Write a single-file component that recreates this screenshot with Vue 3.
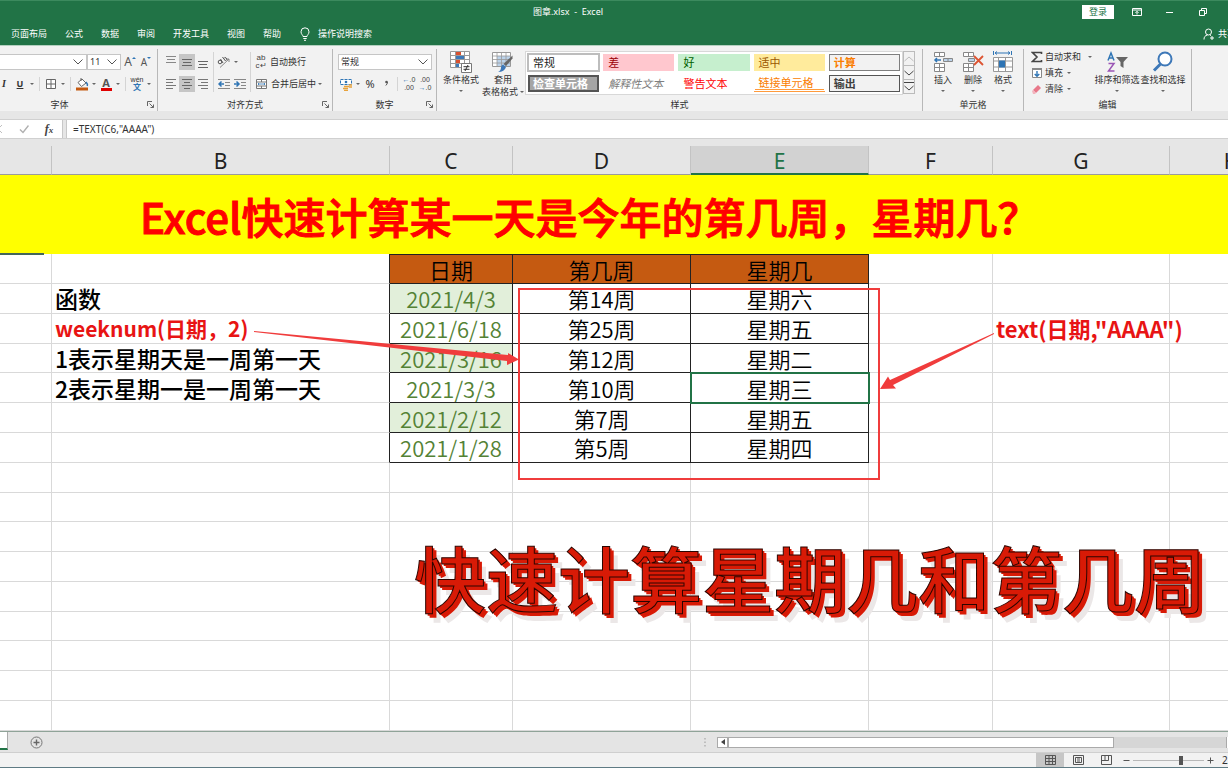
<script setup>
import { ref } from 'vue'

const tabs = ['页面布局', '公式', '数据', '审阅', '开发工具', '视图', '帮助']
const columns = ['A', 'B', 'C', 'D', 'E', 'F', 'G', 'H']
const formula = ref('=TEXT(C6,"AAAA")')
const zoom = ref(69)

const styles = [
  { name: '常规', kind: 'normal' },
  { name: '差', kind: 'bad' },
  { name: '好', kind: 'good' },
  { name: '适中', kind: 'neutral' },
  { name: '计算', kind: 'calc' },
  { name: '检查单元格', kind: 'check' },
  { name: '解释性文本', kind: 'explain' },
  { name: '警告文本', kind: 'warn' },
  { name: '链接单元格', kind: 'linked' },
  { name: '输出', kind: 'output' },
]

const rows = [
  { b: '', c: '日期', d: '第几周', e: '星期几', head: true },
  { b: '函数', c: '2021/4/3', d: '第14周', e: '星期六', tint: true },
  { b: 'weeknum(日期，2)', red: true, c: '2021/6/18', d: '第25周', e: '星期五', g: 'text(日期,"AAAA")' },
  { b: '1表示星期天是一周第一天', c: '2021/3/16', d: '第12周', e: '星期二', tint: true },
  { b: '2表示星期一是一周第一天', c: '2021/3/3', d: '第10周', e: '星期三', active: true },
  { b: '', c: '2021/2/12', d: '第7周', e: '星期五', tint: true },
  { b: '', c: '2021/1/28', d: '第5周', e: '星期四' },
]
const blankRows = 9
</script>

<template>
  <div class="app">
    <header class="top">
      <div class="titlebar">
        <span class="doc">图章.xlsx&nbsp; -&nbsp; Excel</span>
        <div class="win">
          <button class="login">登录</button>
          <button class="wbtn" aria-label="功能区显示选项">
            <svg width="10" height="8" viewBox="0 0 10 8"><path d="M.5.5h9v7h-9zM.5 2h9M5 6.500V3.500M3.500 4.800L5 3.300l1.500 1.500" /></svg>
          </button>
          <button class="wbtn" aria-label="最小化">
            <svg width="10" height="8" viewBox="0 0 10 8"><path d="M1 4.500h7" /></svg>
          </button>
          <button class="wbtn" aria-label="还原">
            <svg width="10" height="8" viewBox="0 0 10 8"><path d="M1.500 2.500h5v5h-5zM3.500 2.500v-2h5v5h-2" /></svg>
          </button>
        </div>
      </div>
      <nav class="tabs">
        <button v-for="t in tabs" :key="t" class="tab">{{ t }}</button>
        <button class="tab tell">
          <svg width="12" height="14" viewBox="0 0 12 14"><path d="M4 9.500C4 8 2 7.300 2 4.800a4 4 0 0 1 8 0C10 7.300 8 8 8 9.500zM4.300 11.500h3.400M5 13.300h2" /></svg>
          <span>操作说明搜索</span>
        </button>
        <button class="tab share">
          <svg width="12" height="12" viewBox="0 0 12 12"><circle cx="5.500" cy="4" r="3" /><path d="M4.500 7C2 7.500 1 9 1 11.500M7 7l1 .6M7 10h4M9 8v4" /></svg>
          <span>共享</span>
        </button>
      </nav>
    </header>

    <div class="ribbon">
      <section class="group g-font">
        <div class="body lines">
          <div class="line first">
            <span class="pick name">
              <select aria-label="字体"><option>等线</option></select>
              <svg width="10" height="6" viewBox="0 0 10 6"><path d="M.5.5L5 5 9.500.5" /></svg>
            </span>
            <span class="pick size">
              <select aria-label="字号"><option>11</option></select>
              <svg width="10" height="6" viewBox="0 0 10 6"><path d="M.5.5L5 5 9.500.5" /></svg>
            </span>
            <button class="ib glyph" aria-label="增大字号"><span>A</span><svg width="4" height="12" viewBox="0 0 4 12"><path d="M0 3L2 1l2 2z" fill="#2f75b5" /></svg></button>
            <button class="ib glyph less" aria-label="减小字号"><span>A</span><svg width="4" height="12" viewBox="0 0 4 12"><path d="M0 1l2 2 2-2z" fill="#2f75b5" /></svg></button>
          </div>
          <div class="line second">
            <button class="ib italic">I</button>
            <button class="ib under">U</button>
            <button class="caret" aria-label="下划线选项"></button>
            <i class="sep"></i>
            <button class="ib" aria-label="边框">
              <svg width="12" height="12" viewBox="0 0 12 12"><path d="M1.500 1.500h9v9h-9zM6 1.500v9M1.500 6h9" stroke="#666" fill="#fff" /></svg>
            </button>
            <button class="caret" aria-label="边框选项"></button>
            <i class="sep"></i>
            <button class="ib" aria-label="填充颜色">
              <svg width="14" height="14" viewBox="0 0 14 14"><path d="M3 5.500L7 2l4 4-4.500 3.500zM6 4V1" stroke="#666" fill="#fff" /><path d="M11 5q2 2 1.300 4" stroke="#2f75b5" stroke-width="1.500" fill="none" /><path d="M1 10.500h12v3H1z" fill="#c55a11" /></svg>
            </button>
            <button class="caret" aria-label="填充颜色选项"></button>
            <button class="ib fontcolor" aria-label="字体颜色"><span>A</span></button>
            <button class="caret" aria-label="字体颜色选项"></button>
            <i class="sep"></i>
            <button class="ib pinyin" aria-label="显示拼音"><span>wén</span><b>文</b></button>
            <button class="caret" aria-label="拼音选项"></button>
          </div>
        </div>
        <footer><span>字体</span><button class="launch" aria-label="字体设置"><svg width="7" height="7" viewBox="0 0 7 7"><path d="M.5 5V.5H5M2.500 2.500l4 4M6.500 3.500v3h-3" /></svg></button></footer>
      </section>

      <section class="group g-align">
        <div class="body blocks">
          <div class="stack">
            <div class="line">
              <button class="ib" aria-label="顶端对齐"><svg width="12" height="12" viewBox="0 0 12 12"><path d="M1 .5h10M2 3.500h8M1 6.500h10" stroke="#888" /></svg></button>
              <button class="ib on" aria-label="垂直居中"><svg width="12" height="12" viewBox="0 0 12 12"><path d="M1 3.500h10M2 6.500h8M1 9.500h10" stroke="#666" /></svg></button>
              <button class="ib" aria-label="底端对齐"><svg width="12" height="12" viewBox="0 0 12 12"><path d="M1 5.500h10M2 8.500h8M1 11.500h10" stroke="#666" /></svg></button>
            </div>
            <div class="line">
              <button class="ib" aria-label="左对齐"><svg width="12" height="12" viewBox="0 0 12 12"><path d="M1 1.500h10M1 4.500h7M1 7.500h10M1 10.500h7" stroke="#777" /></svg></button>
              <button class="ib on" aria-label="居中"><svg width="12" height="12" viewBox="0 0 12 12"><path d="M1 1.500h10M3 4.500h6M1 7.500h10M3 10.500h6" stroke="#666" /></svg></button>
              <button class="ib" aria-label="右对齐"><svg width="12" height="12" viewBox="0 0 12 12"><path d="M1 1.500h10M4 4.500h7M1 7.500h10M4 10.500h7" stroke="#777" /></svg></button>
            </div>
          </div>
          <i class="sep tall"></i>
          <div class="stack">
            <div class="line">
              <button class="ib" aria-label="方向"><svg width="14" height="12" viewBox="0 0 14 12"><path d="M3 11.500L12 3M12 6V3H9" stroke="#888" fill="none" /><circle cx="3" cy="6" r="1.800" stroke="#555" fill="none" /><path d="M3.500 3l2.500 4M5.500 1l3 4M8.800 4.500a1.500 1.500 0 1 0-2-2" stroke="#555" fill="none" /></svg></button>
              <button class="caret" aria-label="方向选项"></button>
            </div>
            <div class="line">
              <button class="ib" aria-label="减少缩进"><svg width="12" height="12" viewBox="0 0 12 12"><path d="M0 1.500h12M7 4.500h5M7 7.500h5M0 10.500h12" stroke="#888" /><path d="M6 6H1M3.500 3.500L1 6l2.500 2.500" stroke="#2f75b5" stroke-width="1.500" fill="none" /></svg></button>
              <button class="ib" aria-label="增加缩进"><svg width="12" height="12" viewBox="0 0 12 12"><path d="M0 1.500h12M7 4.500h5M7 7.500h5M0 10.500h12" stroke="#888" /><path d="M0 6h5M2.500 3.500L5 6 2.500 8.500" stroke="#2f75b5" stroke-width="1.500" fill="none" /></svg></button>
            </div>
          </div>
          <i class="sep tall"></i>
          <div class="stack">
            <div class="line">
              <button class="tool"><span class="abc">ab<br />c↵</span>自动换行</button>
            </div>
            <div class="line">
              <button class="tool">
                <svg width="16" height="12" viewBox="0 0 16 12"><path d="M3.500 1.500h10v9h-10zM3.500 4h10M3.500 8h10M8.500 1.500V4M8.500 8v2.500" stroke="#777" fill="#fff" /><path d="M5 6h7M6 5L5 6l1 1M11 5l1 1-1 1" stroke="#2f75b5" fill="none" stroke-width=".8" /></svg>合并后居中
              </button>
              <button class="caret" aria-label="合并选项"></button>
            </div>
          </div>
        </div>
        <footer><span>对齐方式</span><button class="launch" aria-label="对齐设置"><svg width="7" height="7" viewBox="0 0 7 7"><path d="M.5 5V.5H5M2.500 2.500l4 4M6.500 3.500v3h-3" /></svg></button></footer>
      </section>

      <section class="group g-number">
        <div class="body lines">
          <div class="line">
            <span class="pick format">
              <select aria-label="数字格式"><option>常规</option></select>
              <svg width="10" height="6" viewBox="0 0 10 6"><path d="M.5.5L5 5 9.500.5" /></svg>
            </span>
          </div>
          <div class="line">
            <button class="ib" aria-label="会计数字格式"><svg width="14" height="14" viewBox="0 0 14 14"><path d="M1.500 2.500h11v5h-11z" stroke="#2f75b5" fill="#fff" stroke-dasharray="3 1" /><circle cx="7" cy="5" r="1.300" fill="#2f75b5" /><path d="M5 9.500h5M4 11.500h5M5 13.300h4M10 8h3M10 10h3" stroke="#e8a33d" stroke-width="1.300" /></svg></button>
            <button class="caret" aria-label="货币选项"></button>
            <button class="ib pct">%</button>
            <button class="ib comma" aria-label="千位分隔样式"><svg width="5" height="8" viewBox="0 0 5 8"><circle cx="2.500" cy="2" r="1.300" fill="#555" /><path d="M3.400 2q.2 2-1.600 3.500" stroke="#555" fill="none" /></svg></button>
            <i class="sep"></i>
            <button class="ib dec" aria-label="增加小数位数"><span><b>←</b>.0</span><span>.00</span></button>
            <button class="ib dec" aria-label="减少小数位数"><span>.00</span><span><b>→</b>.0</span></button>
          </div>
        </div>
        <footer><span>数字</span><button class="launch" aria-label="数字设置"><svg width="7" height="7" viewBox="0 0 7 7"><path d="M.5 5V.5H5M2.500 2.500l4 4M6.500 3.500v3h-3" /></svg></button></footer>
      </section>

      <section class="group g-style">
        <div class="body blocks">
          <button class="big cond">
            <svg width="22" height="22" viewBox="0 0 22 22"><path d="M.5.500h19v16H.5zM.5 4.500h19M.5 8.500h19M.5 12.500h19M5.500.5v16M14.500.5v16" stroke="#999" fill="#fff" /><path d="M6 1h5v3H6zM6 9h4v3H6z" fill="#d9502f" /><path d="M6 5h8v3H6zM6 13h3v3H6z" fill="#3d78b8" /><path d="M11.500 12.500h10v9h-10z" fill="#fff" stroke="#777" /><path d="M13.500 15.700h6M13.500 18.300h6M18 14l-3 6" stroke="#333" /></svg>
            <span>条件格式</span><i class="drop"></i>
          </button>
          <button class="big">
            <svg width="22" height="22" viewBox="0 0 22 22"><path d="M.5 1.500h18v14H.5z" stroke="#999" fill="#fff" /><path d="M5 5h13v10H5z" fill="#bcd3ea" /><path d="M.5 5h18M.5 8.500h18M.5 12h18M5 1.500v14M9.500 1.500v14M14 1.500v14" stroke="#999" stroke-width=".8" /><path d="M20.500 4.500v3L14 15l-2.500-2z" fill="#666" /><path d="M11 13.500l3 2.500q-1.500 5-8 5 3-1.500 3-4.500 0-2 2-3z" fill="#3d78b8" /></svg>
            <span>套用</span><span class="drops">表格格式<i class="drop"></i></span>
          </button>
          <div class="gallery">
            <button v-for="s in styles" :key="s.name" class="cellstyle" :class="s.kind">{{ s.name }}</button>
          </div>
          <div class="galnav">
            <button aria-label="上一行" class="off"><svg width="10" height="8" viewBox="0 0 10 8"><path d="M.5 6L5 2l4.500 4" /></svg></button>
            <button aria-label="下一行"><svg width="10" height="8" viewBox="0 0 10 8"><path d="M.5 2L5 6l4.500-4" /></svg></button>
            <button aria-label="其他"><svg width="10" height="10" viewBox="0 0 10 10"><path d="M0 .5h10M.5 4L5 8l4.500-4" /></svg></button>
          </div>
        </div>
        <footer><span>样式</span></footer>
      </section>

      <section class="group g-cells">
        <div class="body blocks">
          <button class="big">
            <svg width="22" height="22" viewBox="0 0 22 22"><path d="M2.500 1.500h10v4h-10zM7.500 1.500v4M2.500 12.500h10v8h-10zM7.500 12.500v8M2.500 16.500h10" stroke="#888" fill="#fff" /><path d="M11.500 7.500h9v3h-9zM16 7.500v3" stroke="#888" fill="#bcd3ea" /><path d="M9 9H3M5 7L3 9l2 2" stroke="#2f75b5" stroke-width="1.500" fill="none" /></svg>
            <span>插入</span><i class="drop"></i>
          </button>
          <button class="big">
            <svg width="22" height="22" viewBox="0 0 22 22"><path d="M1.500 1.500h10v4h-10zM6.500 1.500v4M1.500 12.500h10v8h-10zM6.500 12.500v8M1.500 16.500h10" stroke="#888" fill="#fff" /><path d="M6.500 7.500h6v3h-6z" stroke="#888" fill="#bcd3ea" /><path d="M12 5l9 9M21 5l-9 9" stroke="#dd5533" stroke-width="1.800" /></svg>
            <span>删除</span><i class="drop"></i>
          </button>
          <button class="big">
            <svg width="22" height="22" viewBox="0 0 22 22"><path d="M1.500 6.500h19v14h-19zM1.500 10h19M1.500 16h19M6.500 6v15M13.500 6v15" stroke="#999" fill="#fff" /><path d="M7 9.500h6v7H7z" fill="#2f75b5" /><path d="M3 2h15M5 .5L3 2l2 1.500M16 .5L18 2l-2 1.500M1.500 0v4M19.500 0v4" stroke="#2f75b5" fill="none" /></svg>
            <span>格式</span><i class="drop"></i>
          </button>
        </div>
        <footer><span>单元格</span></footer>
      </section>

      <section class="group g-edit">
        <div class="body blocks">
          <div class="trio">
            <button class="tool"><svg width="12" height="12" viewBox="0 0 12 12"><path d="M10.500 3V1.500h-9L6 6l-4.500 4.500h9V9" stroke="#444" stroke-width="1.600" fill="none" /></svg>自动求和<i class="drop wide"></i></button>
            <button class="tool"><svg width="12" height="12" viewBox="0 0 12 12"><path d="M1.500 1.500h9v9h-9z" fill="#fff" stroke="#888" /><path d="M1 1h10v2H1z" fill="#888" /><path d="M6 4v5M3.700 7L6 9.200 8.300 7" stroke="#2f75b5" stroke-width="1.400" fill="none" /></svg>填充<i class="drop"></i></button>
            <button class="tool"><svg width="12" height="12" viewBox="0 0 12 12"><path d="M2 7l5-5 3 3-5 5z" fill="#e8788a" /><path d="M1 8l1-1 3 3-1 1H2z" fill="#f3b4bd" /></svg>清除<i class="drop"></i></button>
          </div>
          <button class="big edit">
            <svg width="22" height="22" viewBox="0 0 22 22"><path d="M2 9.500L5 2l3 7.500M3 7h4" stroke="#2f75b5" stroke-width="1.500" fill="none" /><path d="M2.500 12.500h5.500l-5.500 7.500H8.500" stroke="#9a55b5" stroke-width="1.500" fill="none" /><path d="M10 6h12l-4.500 5v6l-3-2v-4z" fill="#666" /></svg>
            <span>排序和筛选</span><i class="drop"></i>
          </button>
          <button class="big edit">
            <svg width="22" height="22" viewBox="0 0 22 22"><circle cx="13" cy="8" r="6.500" stroke="#3d78b8" stroke-width="2" fill="#fff" /><path d="M8.500 13L2 19.500" stroke="#3d78b8" stroke-width="3" /></svg>
            <span>查找和选择</span><i class="drop"></i>
          </button>
        </div>
        <footer><span>编辑</span></footer>
      </section>
    </div>

    <div class="formulabar">
      <div class="fxbox">
        <button class="fxb" aria-label="取消"><svg width="10" height="10" viewBox="0 0 10 10"><path d="M1 1l8 8M9 1L1 9" stroke="#c0c0c0" /></svg></button>
        <button class="fxb" aria-label="输入"><svg width="10" height="10" viewBox="0 0 10 10"><path d="M1 5.500L4 8.500 9.500 1.500" stroke="#b0b0b0" stroke-width="1.400" fill="none" /></svg></button>
        <button class="fxb fx" aria-label="插入函数"><i>f</i><small>x</small></button>
      </div>
      <input v-model="formula" class="formula" aria-label="编辑栏" />
    </div>

    <main class="sheet">
      <table>
        <colgroup><col v-for="c in columns" :key="c" :class="'col-' + c" /></colgroup>
        <thead>
          <tr><th v-for="c in columns" :key="c" scope="col" :class="{ sel: c === 'E' }">{{ c === 'A' ? '' : c }}</th></tr>
        </thead>
        <tbody>
          <tr class="banner"><td colspan="8"><span>Excel快速计算某一天是今年的第几周，星期几？</span></td></tr>
          <tr v-for="(r, i) in rows" :key="i" :class="{ head: r.head }">
            <td></td>
            <td class="note edge" :class="{ red: r.red }">{{ r.b }}</td>
            <td class="box date" :class="{ tint: r.tint }">{{ r.c }}</td>
            <td class="box">{{ r.d }}</td>
            <td class="box" :class="{ active: r.active }">{{ r.e }}</td>
            <td></td>
            <td class="note red call">{{ r.g }}</td>
            <td></td>
          </tr>
          <tr v-for="n in blankRows" :key="'blank' + n"><td v-for="c in columns" :key="c"></td></tr>
        </tbody>
      </table>
      <i class="freeze"></i>
      <svg class="marks">
        <rect x="519" y="143" width="360" height="190" fill="none" stroke="#f03c3c" stroke-width="2" />
        <path d="M254 185L508 209V207L519 213.500L507 219V215L254 186z" fill="#f03c3c" />
        <path d="M994 187L890 234L888 230.500L880 243L896 242.500L893 239L994 188z" fill="#f03c3c" />
      </svg>
      <div class="wordart">快速计算星期几和第几周</div>
    </main>

    <div class="sheetbar">
      <span class="current"></span>
      <button class="add" aria-label="新工作表"><svg width="13" height="13" viewBox="0 0 13 13"><circle cx="6.500" cy="6.500" r="5.500" fill="none" stroke="#777" /><path d="M6.500 3.500v6M3.500 6.500h6" stroke="#666" stroke-width="1.400" /></svg></button>
      <svg class="grip" width="3" height="9" viewBox="0 0 3 9"><path d="M1 0v1.500M1 3.500V5M1 7v1.500" stroke="#999" /></svg>
      <div class="scroll">
        <button class="arrow" aria-label="向左滚动"><svg width="4" height="6" viewBox="0 0 4 6"><path d="M4 0v6L0 3z" fill="#444" /></svg></button>
        <span class="thumb"></span>
        <span class="track"></span>
        <span class="end"></span>
      </div>
    </div>

    <div class="status">
      <button class="view on" aria-label="普通"><svg width="11" height="10" viewBox="0 0 11 10"><path d="M.5.5h10v9H.5zM.5 3.500h10M.5 6.500h10M4 .5v9M7.500.5v9" /></svg></button>
      <button class="view" aria-label="页面布局"><svg width="11" height="10" viewBox="0 0 11 10"><path d="M.5.5h10v9H.5zM2.500 2.500h6v5h-6zM4 4h3M4 6h3" /></svg></button>
      <button class="view" aria-label="分页预览"><svg width="11" height="10" viewBox="0 0 11 10"><path d="M.5.5h10v9H.5zM4 .5v5M7.500.5v5M.5 5.500h7" /></svg></button>
      <button class="zb" aria-label="缩小"><svg width="7" height="7" viewBox="0 0 7 7"><path d="M.5 3.500h6" /></svg></button>
      <input v-model="zoom" class="slider" type="range" min="0" max="100" aria-label="显示比例" />
      <button class="zb" aria-label="放大"><svg width="7" height="7" viewBox="0 0 7 7"><path d="M.5 3.500h6M3.500.5v6" /></svg></button>
      <span class="pctval">220%</span>
    </div>
  </div>
</template>

<style>
html, body { margin: 0; overflow: hidden; }
</style>

<style scoped>
.app {
  display: flex;
  flex-direction: column;
  height: 100vh;
  overflow: hidden;
  background: #e6e6e6;
  color: #333;
  font: 9px/12px "Noto Sans", "Noto Sans CJK SC", sans-serif;
}
.app * { box-sizing: border-box; }
button { margin: 0; padding: 0; border: 0; background: none; color: inherit; font: inherit; white-space: nowrap; }
svg { flex: none; }

.top { background: #217346; color: #fff; border-top: 1px solid #3c8a5e; }
.titlebar { display: grid; grid-template-columns: 1fr auto 1fr; align-items: center; height: 21px; padding-right: 20px; }
.doc { grid-column: 2; margin-right: 72px; }
.win { display: flex; justify-content: flex-end; align-items: center; gap: 23px; }
.login { width: 32px; height: 14px; background: #fff; color: #217346; margin-right: -5px; }
.wbtn { display: flex; width: 10px; }
.wbtn svg, .tabs svg { fill: none; stroke: #fff; stroke-width: 1; }
.tabs { display: flex; align-items: center; gap: 18px; height: 23px; padding-left: 11px; }
.tab { display: flex; align-items: center; gap: 7px; flex: none; }
.share { margin-left: auto; margin-right: -8px; gap: 3px; }

.ribbon { display: flex; height: 66px; background: #f2f2f2; border-top: 1px solid #b4d0c0; flex: none; }
.group { display: flex; flex-direction: column; border-right: 1px solid #b8b8b8; margin-top: 3px; flex: none; }
.body { flex: 1; }
.lines { display: flex; flex-direction: column; gap: 6px; padding-top: 5px; }
.blocks { display: flex; align-items: flex-start; }
.stack { display: flex; flex-direction: column; gap: 6px; padding-top: 5px; }
.line { display: flex; align-items: center; height: 16px; }
.group footer { display: grid; grid-template-columns: 1fr auto 1fr; height: 13px; align-items: center; }
.group footer span { grid-column: 2; }
.launch { justify-self: end; display: flex; margin-right: 3px; }
.launch svg { fill: none; stroke: #666; }
.g-font { width: 196px; margin-left: -38px; }
.g-font .lines { padding-left: 16px; }
.g-align { width: 175px; }
.g-align .blocks { padding-left: 5px; }
.g-number { width: 104px; }
.g-number .lines { padding-left: 5px; }
.g-style { width: 486px; }
.g-style .blocks { padding-left: 4px; }
.g-cells { width: 101px; }
.g-cells .blocks { padding-left: 5px; }
.g-edit { width: 168px; }
.g-edit .blocks { padding-left: 7px; }
.g-font .second { margin-left: 18px; }

.pick { display: flex; align-items: center; height: 16px; border: 1px solid #c6c6c6; background: #fff; }
.pick select { flex: 1; min-width: 0; appearance: none; border: 0; background: none; padding: 0 0 0 2px; font: inherit; color: #333; outline: 0; }
.pick svg { margin-right: 3px; fill: none; stroke: #555; }
.name { width: 109px; }
.size { width: 34px; margin-right: 1px; }
.format { width: 94px; }
.ib { display: flex; align-items: center; justify-content: center; width: 16px; height: 16px; flex: none; }
.ib.on { background: #c6c6c6; }
.glyph { font-size: 12px; color: #555; }
.glyph.less { font-size: 10px; }
.italic { font: italic bold 10px/12px "Liberation Serif", serif; }
.under { font-weight: bold; text-decoration: underline; }
.sep { width: 1px; height: 14px; margin: 0 3px; background: #d4d4d4; }
.sep.tall { height: 40px; margin: 3px 2px 0; }
.caret { width: 8px; height: 12px; display: flex; align-items: center; justify-content: center; }
.caret::before, .drop { content: ""; display: block; border: 2px solid transparent; border-top-color: #666; border-bottom: 0; width: 0; height: 0; }
.fontcolor span { display: block; width: 11px; height: 13px; border-bottom: 3px solid #e00000; font-weight: bold; font-size: 11px; line-height: 10px; color: #555; }
.pinyin { flex-direction: column; font: 7px/7px "Liberation Sans", "Noto Sans CJK SC", sans-serif; }
.pinyin b { color: #2f75b5; font-size: 8px; line-height: 9px; }
.abc { width: 16px; font: 8px/8px "Liberation Sans", sans-serif; text-align: center; color: #444; }
.tool { display: flex; align-items: center; gap: 1px; height: 16px; }
.tool svg { margin-right: 1px; }
.tool .drop { margin-left: 3px; }
.tool .drop.wide { margin-left: 6px; }
.pct { font-size: 11px; }
.dec { flex-direction: column; font: 7px/8px "Liberation Sans", sans-serif; color: #444; }
.dec b { color: #2f75b5; }

.big { display: flex; flex-direction: column; align-items: center; width: 30px; padding-top: 2px; }
.big svg { margin-bottom: 1px; }
.g-style .big { width: 44px; }
.g-style .big.cond { width: 40px; }
.big.edit { width: 46px; }
.big span { line-height: 12px; }
.big > .drop { margin-top: 4px; }
.drops { display: flex; align-items: center; gap: 2px; }
.gallery { display: grid; grid-template-columns: repeat(5, 1fr); gap: 4px; width: 378px; height: 44px; margin-top: 2px; padding: 2px; background: #fff; border: 1px solid #d8d8d8; }
.cellstyle { text-align: left; padding-left: 4px; font-size: 11px; line-height: 15px; border: 1px solid transparent; color: #222; }
.normal { outline: 2px solid #bdbdbd; outline-offset: -1px; }
.bad { background: #ffc7ce; color: #9c0006; }
.good { background: #c6efce; color: #006100; }
.neutral { background: #ffeb9c; color: #9c5700; }
.calc { background: #f2f2f2; border-color: #7f7f7f; color: #fa7d00; font-weight: bold; }
.check { background: #a5a5a5; border: 2px solid #555; color: #fff; font-weight: bold; line-height: 13px; padding-left: 3px; }
.explain { color: #7f7f7f; font-style: italic; }
.warn { color: #f00; }
.linked { color: #fa7d00; border-bottom: 3px double #ff9a3c; line-height: 13px; }
.output { background: #f2f2f2; border-color: #555; font-weight: bold; color: #3f3f3f; }
.galnav { display: flex; flex-direction: column; margin-top: 2px; width: 12px; }
.galnav button { display: flex; align-items: center; justify-content: center; height: 15px; border: 1px solid #bbb; margin-bottom: -1px; }
.galnav svg { fill: none; stroke: #444; }
.galnav .off svg { stroke: #bbb; }
.trio { width: 63px; }

.formulabar { display: flex; gap: 3px; margin: 8px 0 7px; height: 20px; flex: none; border-bottom: 1px solid #d0d0d0; border-top: 1px solid #d0d0d0; }
.fxbox { display: flex; align-items: center; width: 63px; background: #fff; padding-left: 1px; border-right: 1px solid #c8c8c8; }
.fxb { display: flex; align-items: center; justify-content: center; width: 24px; margin-left: 1px; }
.fxb:first-child { width: 10px; margin-left: -8px; margin-right: 8px; }
.fx { color: #444; font: bold 12px/14px "Liberation Serif", serif; align-items: baseline; }
.fx small { font-size: 9px; font-style: italic; }
.formula { flex: 1; border: 0; border-left: 1px solid #c8c8c8; background: #fff; padding: 0 6px; font: inherit; font-size: 10px; color: #333; outline: 0; }

.sheet { position: relative; flex: 1; min-height: 0; overflow: hidden; background: #fff; font-family: "Noto Sans CJK SC", sans-serif; }
table { width: 1294px; height: 100%; table-layout: fixed; border-collapse: separate; border-spacing: 0; font-size: 22px; line-height: 26px; color: #000; }
.col-A { width: 52px; }
.col-B { width: 338px; }
.col-C { width: 123px; }
.col-D, .col-E { width: 178px; }
.col-F, .col-H { width: 124px; }
.col-G { width: 177px; }
th, td { padding: 0; white-space: nowrap; border-right: 1px solid #d9d9d9; border-bottom: 1px solid #d9d9d9; }
th { height: 29px; padding-top: 2px; background: #e6e6e6; border-right-color: #c3c3c3; border-bottom-color: #9b9b9b; font: 400 21px/24px "Noto Sans", sans-serif; color: #222; }
th.sel { background: #d2d2d2; color: #217346; border-bottom: 2px solid #217346; }
td { height: 29px; text-align: center; }
.banner td { height: 77px; padding: 2px 0 0 140px; background: #ff0; border: 0; text-align: left; font-size: 42px; line-height: 60px; font-weight: 500; color: #f00; -webkit-text-stroke: 1px #f00; }
td.note { text-align: left; padding-left: 3px; font-size: 23px; font-weight: 500; }
td.note.red { color: #e81414; font-size: 21px; font-weight: 600; }
td.note.call { font-size: 22px; }
td.edge { border-right-color: #222; }
td.box { border-color: #222; font-weight: 350; }
td.date { color: #548235; }
td.tint { background: #e2efda; }
.head td.box { background: #c55a11; color: #000; border-top: 1px solid #222; }
td.active { outline: 2px solid #217346; outline-offset: -1px; }
.freeze { position: absolute; left: 0; top: 107px; width: 44px; height: 2px; background: #44665a; }
.marks { position: absolute; left: 0; top: 0; width: 100%; height: 100%; }
.wordart {
  position: absolute;
  left: 414px;
  top: 378px;
  font-size: 72px;
  line-height: 104px;
  font-weight: 500;
  white-space: nowrap;
  color: #d81a06;
  -webkit-text-stroke: 1px #2a0500;
  text-shadow: 2px 2px 0 #d81a06, 4px 4px 0 #d81a06, 8px 9px 0 #ebe7e7;
}

.sheetbar { display: flex; align-items: center; height: 21px; flex: none; background: #e4e4e4; border-top: 1px solid #8fa398; }
.current { width: 8px; height: 18px; align-self: flex-start; background: #fff; border-bottom: 2px solid #217346; border-right: 1px solid #aaa; }
.add { display: flex; margin-left: 22px; }
.grip { margin-left: auto; }
.scroll { display: flex; width: 41.6%; height: 11px; margin-left: 10px; background: #d6d6d6; }
.arrow { display: flex; align-items: center; justify-content: center; width: 11px; background: #fff; border: 1px solid #aaa; }
.thumb { flex: 31; background: #fff; border: 1px solid #aaa; }
.track { flex: 9; }
.end { width: 2px; background: #fff; border-left: 1px solid #aaa; }
.status { display: flex; justify-content: flex-end; align-items: center; height: 16px; flex: none; background: #f2f2f2; border-top: 1px solid #cfcfcf; border-bottom: 1px solid #5f7b84; }
.view { display: flex; align-items: center; justify-content: center; width: 28px; height: 14px; }
.view.on { background: #c6c6c6; }
.view svg, .zb svg { fill: none; stroke: #555; }
.zb { display: flex; padding: 0 3px; }
.slider { appearance: none; width: 71px; height: 14px; margin: 0; background: linear-gradient(#b8b8b8, #b8b8b8) center / 100% 1px no-repeat; }
.slider::-webkit-slider-thumb { appearance: none; width: 4px; height: 9px; background: #555; }
.pctval { margin-left: 5px; width: 6px; flex: none; overflow: hidden; font-size: 10px; }
</style>
